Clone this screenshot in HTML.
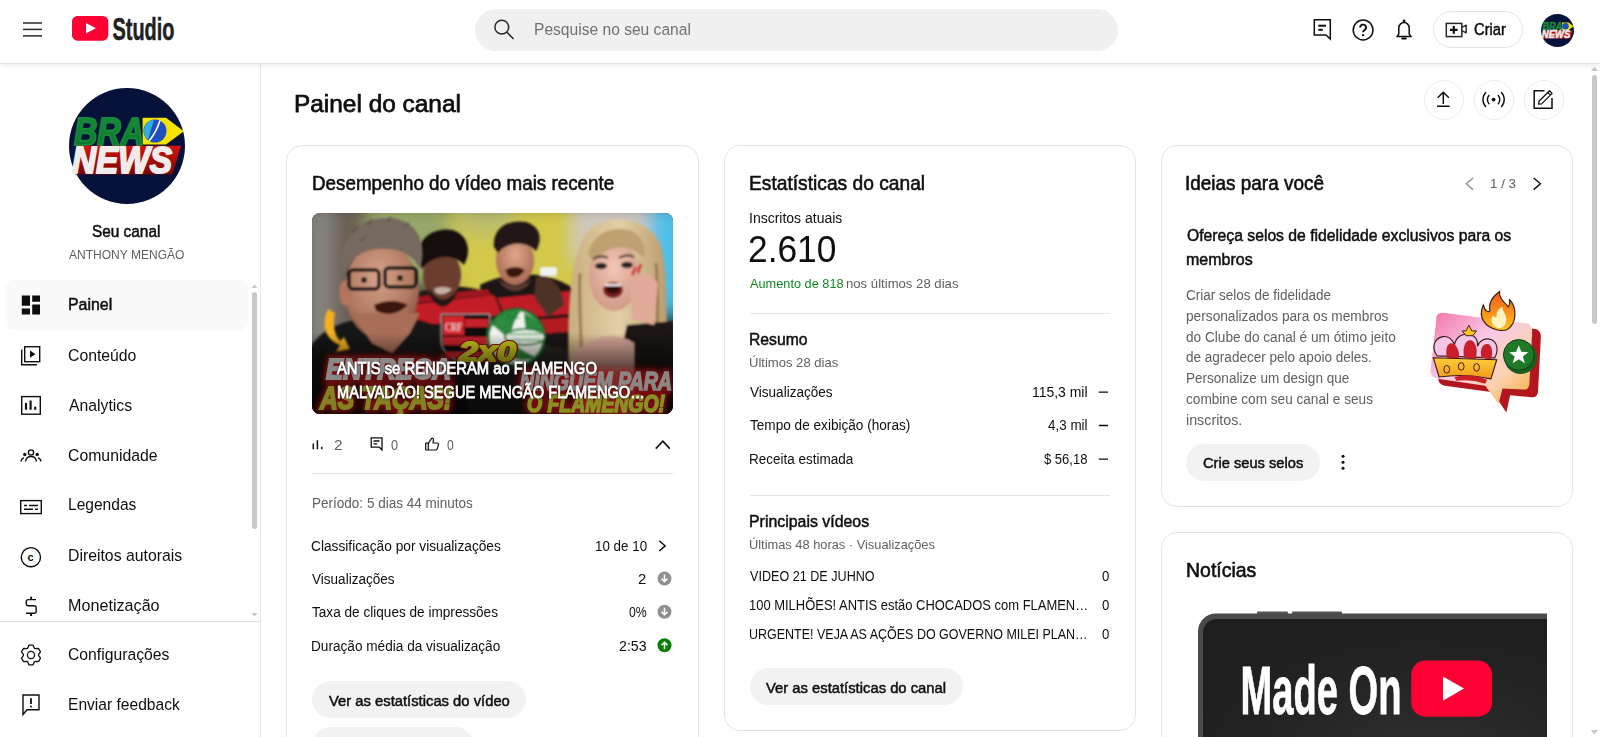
<!DOCTYPE html>
<html><head><meta charset="utf-8"><title>Painel do canal - YouTube Studio</title>
<style>
html,body{margin:0;padding:0;width:1600px;height:737px;overflow:hidden;background:#fff;font-family:"Liberation Sans",sans-serif;}
.t{position:absolute;white-space:nowrap;transform-origin:0 0;}
.a{position:absolute;}
.hdr{position:absolute;left:0;top:0;width:1600px;height:63px;background:#fff;box-shadow:0 1px 0 #e3e3e3,0 2px 6px rgba(0,0,0,.09)}
.side{position:absolute;left:0;top:64px;width:260px;height:673px;border-right:1px solid #e8e8e8;background:#fff}
.card{position:absolute;border:1px solid #e5e5e5;border-radius:16px;background:#fff;box-sizing:border-box}
.btn{position:absolute;background:#f2f2f2;border-radius:19px}
.div{position:absolute;height:1px;background:#e5e5e5}
svg{position:absolute;overflow:visible}

</style></head><body>
<div class="side"></div>
<!-- HEADER -->
<div class="hdr"></div>
<svg style="left:0;top:0" width="1600" height="64">
  <g stroke="#282828" stroke-width="1.5">
    <line x1="23" y1="23" x2="42" y2="23"/><line x1="23" y1="29.4" x2="42" y2="29.4"/><line x1="23" y1="35.9" x2="42" y2="35.9"/>
  </g>
  <rect x="72" y="16" width="36.3" height="24.7" rx="5.5" fill="#ff0033"/>
  <path d="M86 22.9 L95.8 28.2 L86 33.5 Z" fill="#fff"/>
  <text x="112.5" y="39.8" font-family="Liberation Sans" font-weight="bold" font-size="31.4" textLength="62" lengthAdjust="spacingAndGlyphs" fill="#212121" stroke="#212121" stroke-width="0.5">Studio</text>
</svg>
<div class="a" style="left:475px;top:9px;width:643px;height:42px;border-radius:21px;background:#f0f0f0"></div>
<svg style="left:0;top:0" width="1600" height="64">
  <circle cx="501.8" cy="27.2" r="6.9" fill="none" stroke="#282828" stroke-width="1.5"/>
  <line x1="506.9" y1="32.3" x2="513.6" y2="39" stroke="#282828" stroke-width="1.5"/>
  <!-- feedback header -->
  <path d="M1314.3 19.8 H1330.3 V39 L1326 34.9 H1314.3 Z" fill="none" stroke="#0f0f0f" stroke-width="1.5" stroke-linejoin="miter"/>
  <line x1="1318.3" y1="25.7" x2="1326" y2="25.7" stroke="#0f0f0f" stroke-width="2"/>
  <line x1="1318.3" y1="29.8" x2="1322.8" y2="29.8" stroke="#0f0f0f" stroke-width="2"/>
  <!-- help -->
  <circle cx="1363.1" cy="30" r="9.9" fill="none" stroke="#0f0f0f" stroke-width="1.5"/>
  <path d="M1360.2 27.6 a2.9 2.9 0 1 1 4.4 2.4 c-1.1 .7 -1.5 1.2 -1.5 2.2" fill="none" stroke="#0f0f0f" stroke-width="1.9"/>
  <circle cx="1363.1" cy="35.2" r="1.15" fill="#0f0f0f"/>
  <!-- bell -->
  <path d="M1397 36.6 H1411.2 L1409.2 34 V28 a5.2 5.5 0 0 0 -10.4 0 V34 Z" fill="none" stroke="#0f0f0f" stroke-width="1.5" stroke-linejoin="round"/>
  <path d="M1402.3 38.6 h3.6" stroke="#0f0f0f" stroke-width="2" stroke-linecap="round"/>
  <circle cx="1404.1" cy="21" r="1.4" fill="#0f0f0f"/>
</svg>
<div class="a" style="left:1433px;top:11px;width:88px;height:35px;border:1px solid #e5e5e5;border-radius:19px;"></div>
<svg style="left:0;top:0" width="1600" height="64">
  <rect x="1446.3" y="23.4" width="15.5" height="13.2" fill="none" stroke="#282828" stroke-width="1.5"/>
  <path d="M1461.8 27.3 L1466.2 25.2 V32.8 L1461.8 30.7" fill="none" stroke="#282828" stroke-width="1.4" stroke-linejoin="round"/>
  <path d="M1453.8 26.1 V33.8 M1449.9 29.9 H1457.6" stroke="#0f0f0f" stroke-width="2.2"/>
</svg>
<!-- small avatar -->
<svg style="left:1541px;top:13.5px" width="33" height="33" viewBox="0 0 116 116">
  <circle cx="58" cy="58" r="58" fill="#06123a"/>
  <path d="M73.6 29.8 H97 L114.8 43.2 L97 56.6 H73.6 Z" fill="#f7e300"/>
  <circle cx="86" cy="43" r="11.5" fill="#1f4fc0"/>
  <text x="5" y="56.6" font-family="Liberation Sans" font-weight="bold" font-style="italic" font-size="38.7" fill="#15883a" stroke="#15883a" stroke-width="2.2" textLength="70" lengthAdjust="spacingAndGlyphs">BRA</text>
  <path d="M8 57.7 H112.1 L103.4 86.4 H6.3 Z" fill="#b80b0b"/>
  <text x="3" y="85.4" font-family="Liberation Sans" font-weight="bold" font-style="italic" font-size="37.5" fill="#f1ecec" stroke="#f1ecec" stroke-width="2" textLength="100" lengthAdjust="spacingAndGlyphs">NEWS</text>
</svg>

<!-- SIDEBAR -->
<svg style="left:69px;top:88px" width="116" height="116" viewBox="0 0 116 116">
  <defs><linearGradient id="redb" x1="0" y1="0" x2="0" y2="1"><stop offset="0" stop-color="#d5140f"/><stop offset="1" stop-color="#7a0606"/></linearGradient>
  <linearGradient id="grn" x1="0" y1="0" x2="0" y2="1"><stop offset="0" stop-color="#17923c"/><stop offset="1" stop-color="#0d6e2a"/></linearGradient></defs>
  <circle cx="58" cy="58" r="58" fill="#06123a"/>
  <path d="M73.6 29.8 H97 L114.8 43.2 L97 56.6 H73.6 Z" fill="#f7e300"/>
  <circle cx="86" cy="43" r="11.5" fill="#1f4fc0"/>
  <path d="M76 38 a11.5 11.5 0 0 1 9 -6.5 L79 52 a11.5 11.5 0 0 1 -3 -14 z" fill="#33aee0"/>
  <path d="M91 32.5 Q87 45 80 53" stroke="#fff" stroke-width="1.6" fill="none"/>
  <text x="5" y="56.6" font-family="Liberation Sans" font-weight="bold" font-style="italic" font-size="38.7" fill="url(#grn)" stroke="#15883a" stroke-width="2.2" stroke-linejoin="round" textLength="70" lengthAdjust="spacingAndGlyphs">BRA</text>
  <path d="M8 57.7 H112.1 L103.4 86.4 H6.3 Z" fill="url(#redb)"/>
  <text x="3" y="85.4" font-family="Liberation Sans" font-weight="bold" font-style="italic" font-size="37.5" fill="#f1ecec" stroke="#f1ecec" stroke-width="2" stroke-linejoin="round" textLength="100" lengthAdjust="spacingAndGlyphs">NEWS</text>
</svg>
<div class="a" style="left:6px;top:280px;width:242px;height:50px;border-radius:8px;background:#f9f9f9"></div>
<!-- sidebar scrollbar -->
<div class="a" style="left:252px;top:292px;width:5px;height:237px;border-radius:3px;background:#c8c8c8"></div>
<svg style="left:0;top:0" width="260" height="737">
  <path d="M251.5 288 L254.5 284.5 L257.5 288 Z" fill="#c8c8c8"/>
  <path d="M251.5 613 L254.5 616.5 L257.5 613 Z" fill="#c8c8c8"/>
</svg>
<div class="div" style="left:0;top:621px;width:260px"></div>
<svg style="left:0;top:0" width="260" height="737">
  <!-- dashboard -->
  <path d="M21.8 295.6 h8.2 v10.2 h-8.2z M21.8 308.6 h8.2 v6 h-8.2z M32.2 295.6 h7.8 v6.2 h-7.8z M32.2 304.5 h7.8 v10.1 h-7.8z" fill="#0f0f0f"/>
  <!-- content -->
  <g fill="none" stroke="#0f0f0f" stroke-width="1.4">
    <rect x="24.7" y="346.7" width="15" height="15"/>
    <path d="M21.7 349.5 V364.7 H36.9"/>
  </g>
  <path d="M30 350.6 L35.5 354.2 L30 357.8 Z" fill="#0f0f0f"/>
  <!-- analytics -->
  <rect x="21.7" y="396.6" width="18.6" height="17.6" fill="none" stroke="#0f0f0f" stroke-width="1.4"/>
  <path d="M26 403 v6.8 M30.6 400.6 v9.2 M35.2 406.8 v3" stroke="#0f0f0f" stroke-width="2.1"/>
  <!-- community -->
  <g fill="none" stroke="#0f0f0f" stroke-width="1.4">
    <circle cx="31" cy="452.5" r="2.6"/>
    <path d="M25.5 461.5 c0.5-3.5 2.8-5 5.5-5 s5 1.5 5.5 5"/>
    <path d="M21 461.5 c0.2-2 1.2-3.2 3-3.6 M41 461.5 c-.2-2-1.2-3.2-3-3.6"/>
  </g>
  <circle cx="24.8" cy="454.5" r="1.7" fill="#0f0f0f"/><circle cx="37.2" cy="454.5" r="1.7" fill="#0f0f0f"/>
  <!-- subtitles -->
  <rect x="20.7" y="500.6" width="20.6" height="13" fill="none" stroke="#0f0f0f" stroke-width="1.4"/>
  <path d="M24 505.5 h3 M29 505.5 h9 M24 509.3 h9 M35 509.3 h3" stroke="#0f0f0f" stroke-width="1.6"/>
  <!-- copyright -->
  <circle cx="30.9" cy="557.2" r="9.6" fill="none" stroke="#0f0f0f" stroke-width="1.4"/>
  <text x="27.6" y="561" font-family="Liberation Sans" font-weight="bold" font-size="11" fill="#0f0f0f">c</text>
  <!-- dollar -->
  <path d="M36 599.6 H28.3 Q26.3 599.6 26.3 601.6 V603.7 Q26.3 605.7 28.3 605.7 H34.2 Q36.2 605.7 36.2 607.7 V611.3 Q36.2 613.3 34.2 613.3 H26" fill="none" stroke="#0f0f0f" stroke-width="1.4"/>
  <path d="M31.1 596.8 V599.6 M31.1 613.3 V616" stroke="#0f0f0f" stroke-width="1.9"/>
  <!-- gear -->
  <g>
    <path d="M27.67 648.17 L28.92 645.22 L33.08 645.22 L34.33 648.17 L35.25 648.70 L38.43 648.31 L40.51 651.91 L38.58 654.47 L38.58 655.53 L40.51 658.09 L38.43 661.69 L35.25 661.30 L34.33 661.83 L33.08 664.78 L28.92 664.78 L27.67 661.83 L26.75 661.30 L23.57 661.69 L21.49 658.09 L23.42 655.53 L23.42 654.47 L21.49 651.91 L23.57 648.31 L26.75 648.70 Z" fill="none" stroke="#0f0f0f" stroke-width="1.3" stroke-linejoin="round"/>
    <circle cx="31" cy="655" r="3.6" fill="none" stroke="#0f0f0f" stroke-width="1.3"/>
  </g>
  <!-- feedback -->
  <path d="M23 695 H39 V709.8 H27 L23 714.5 Z" fill="none" stroke="#0f0f0f" stroke-width="1.4" stroke-linejoin="miter"/>
  <path d="M31 698.3 v5.6" stroke="#0f0f0f" stroke-width="1.8"/>
  <circle cx="31" cy="706.6" r="1" fill="#0f0f0f"/>
</svg>
<!-- MAIN -->
<div class="a" style="left:1424px;top:80px;width:38px;height:38px;border:1px solid #ececec;border-radius:50%"></div>
<div class="a" style="left:1474px;top:80px;width:38px;height:38px;border:1px solid #ececec;border-radius:50%"></div>
<div class="a" style="left:1524px;top:80px;width:38px;height:38px;border:1px solid #ececec;border-radius:50%"></div>
<svg style="left:0;top:0" width="1600" height="140">
  <!-- upload -->
  <path d="M1443.3 92.5 V104 M1437.7 97.8 L1443.3 92.2 L1448.9 97.8 M1437 106.2 H1449.6" fill="none" stroke="#0f0f0f" stroke-width="1.5"/>
  <!-- live -->
  <circle cx="1493.6" cy="99.6" r="1.9" fill="#0f0f0f"/>
  <path d="M1489.3 95 a6.5 6.5 0 0 0 0 9.2 M1497.9 95 a6.5 6.5 0 0 1 0 9.2 M1486 92.2 a10.5 10.5 0 0 0 0 14.8 M1501.2 92.2 a10.5 10.5 0 0 1 0 14.8" fill="none" stroke="#0f0f0f" stroke-width="1.4"/>
  <!-- edit -->
  <path d="M1544.5 90.8 H1534.2 V108.3 H1552 V98" fill="none" stroke="#0f0f0f" stroke-width="1.5"/>
  <path d="M1538.6 104.2 L1539 101.3 L1549.5 90.8 L1552.1 93.4 L1541.6 103.9 Z M1547.8 92.5 L1550.4 95.1" fill="none" stroke="#0f0f0f" stroke-width="1.3" stroke-linejoin="round"/>
</svg>
<!-- main scrollbar -->
<div class="a" style="left:1591.8px;top:75px;width:5.5px;height:249px;border-radius:3px;background:#c8c8c8"></div>
<svg style="left:1580px;top:60px" width="20" height="677">
  <path d="M10.8 10.9 L14.4 6.8 L18 10.9 Z" fill="#c8c8c8"/>
  <path d="M10.8 669.9 L14.4 674.4 L18 669.9 Z" fill="#c8c8c8"/>
</svg>

<!-- CARD 1 -->
<div class="card" style="left:286px;top:145px;width:413px;height:620px"></div>
<div class="div" style="left:312px;top:473px;width:361px"></div>
<!-- THUMB -->
<svg style="left:312px;top:213px" width="361" height="201" viewBox="0 0 361 201">
<defs>
  <clipPath id="thc"><rect width="361" height="201" rx="8"/></clipPath>
  <filter id="bl1" x="-20%" y="-20%" width="140%" height="140%"><feGaussianBlur stdDeviation="9"/></filter>
  <filter id="bl2" x="-20%" y="-20%" width="140%" height="140%"><feGaussianBlur stdDeviation="1.3"/></filter>
  <filter id="bl3" x="-20%" y="-20%" width="140%" height="140%"><feGaussianBlur stdDeviation="2.5"/></filter>
  <linearGradient id="shade" x1="0" y1="0" x2="0" y2="1">
    <stop offset="0.6" stop-color="#000" stop-opacity="0"/>
    <stop offset="0.8" stop-color="#000" stop-opacity=".35"/>
    <stop offset="1" stop-color="#000" stop-opacity=".5"/>
  </linearGradient>
  <radialGradient id="skin1" cx=".45" cy=".35" r=".65"><stop offset="0" stop-color="#d8a48c"/><stop offset=".7" stop-color="#b07860"/><stop offset="1" stop-color="#8a5544"/></radialGradient>
  <radialGradient id="skin2" cx=".5" cy=".4" r=".6"><stop offset="0" stop-color="#f2c6b4"/><stop offset="1" stop-color="#d19a86"/></radialGradient>
  <radialGradient id="skin3" cx=".5" cy=".4" r=".6"><stop offset="0" stop-color="#e0a88c"/><stop offset="1" stop-color="#a86a52"/></radialGradient>
  <linearGradient id="hair" x1="0" y1="0" x2="1" y2="0"><stop offset="0" stop-color="#c9ae7e"/><stop offset=".5" stop-color="#e3cfa6"/><stop offset="1" stop-color="#b89a6a"/></linearGradient>
</defs>
<g clip-path="url(#thc)">
  <rect width="361" height="201" fill="#2a2624"/>
  <g filter="url(#bl1)">
    <rect x="-10" y="-10" width="40" height="170" fill="#86847f"/>
    <rect x="22" y="-10" width="35" height="160" fill="#6a5d52"/>
    <rect x="55" y="-10" width="90" height="85" fill="#98a868"/>
    <rect x="140" y="-10" width="140" height="105" fill="#d2c848"/>
    <rect x="150" y="-10" width="50" height="30" fill="#b8bc70"/>
    <rect x="262" y="-10" width="80" height="60" fill="#cfc8c0"/>
    <rect x="336" y="-10" width="40" height="115" fill="#4fc0e8"/>
    <rect x="330" y="100" width="40" height="60" fill="#242020"/>
  </g>
  <!-- player 2 (behind) -->
  <g filter="url(#bl2)">
    <path d="M168 72 C190 60 232 54 262 76 L276 112 L255 135 L172 125 Z" fill="#1e1616"/>
    <path d="M176 86 L258 78 L266 100 L180 108 Z" fill="#c01c26"/>
    <path d="M180 110 L262 104 L266 118 L184 124 Z" fill="#b01a22"/>
    <ellipse cx="203" cy="47" rx="19" ry="25" fill="url(#skin3)"/>
    <path d="M182 34 C180 14 198 6 214 9 C230 14 230 28 224 38 C214 28 196 28 186 40 Z" fill="#211815"/>
    <path d="M193 57 Q203 51 213 57 Q206 68 196 63 Z" fill="#3a1210"/>
    <path d="M186 66 Q203 80 220 66 L216 72 Q203 84 190 72 Z" fill="#5a3a30"/>
    <rect x="228" y="54" width="17" height="9" rx="2" fill="#f0f0f0"/>
    <path d="M224 64 C236 60 250 70 252 92 L236 104 L222 84 Z" fill="#4e3228"/>
  </g>
  <!-- player 1 -->
  <g filter="url(#bl2)">
    <path d="M92 112 L106 80 C128 70 160 72 184 82 L196 112 L186 135 L98 135 Z" fill="#1e1414"/>
    <path d="M98 92 L182 82 L190 102 L100 114 Z" fill="#c41e28"/>
    <path d="M103 84 L176 76 L179 82 L105 90 Z" fill="#a0161c"/>
    <ellipse cx="130" cy="62" rx="19" ry="25" fill="#6a3e2e"/>
    <path d="M106 48 C103 24 124 14 140 17 C156 21 160 38 152 52 C142 40 120 42 110 56 Z" fill="#120e0e"/>
    <path d="M116 74 Q130 98 146 76 Q142 92 130 94 Q118 90 116 74 Z" fill="#241612"/>
    <path d="M122 76 Q130 72 140 76 Q132 84 124 80 Z" fill="#f0e0d8" opacity=".7"/>
  </g>
  <!-- man 1 (left) -->
  <g filter="url(#bl2)">
    <path d="M-5 140 C8 112 40 104 78 104 C118 104 140 118 152 150 L156 205 L-5 205 Z" fill="#141414"/>
    <ellipse cx="70" cy="78" rx="37" ry="48" fill="url(#skin1)"/>
    <ellipse cx="34" cy="80" rx="7" ry="13" fill="#b27560"/>
    <path d="M40 100 L108 100 L98 120 L80 140 L60 130 Z" fill="#a86e58"/>
    <path d="M30 56 C26 18 56 2 80 5 C104 8 116 28 108 56 C102 42 86 34 66 36 C50 38 38 44 32 60 Z" fill="#76695f"/>
    <path d="M40 20 l6 -6 M55 12 l5 -5 M75 9 l4 -5 M92 14 l5 -4 M48 28 l6-4" stroke="#5e554e" stroke-width="2"/>
    <rect x="37" y="57" width="30" height="19" rx="4" fill="none" stroke="#0e0e0e" stroke-width="3.5"/>
    <rect x="73" y="55" width="31" height="19" rx="4" fill="none" stroke="#0e0e0e" stroke-width="3.5"/>
    <circle cx="52" cy="67" r="3" fill="#2a1a14"/><circle cx="88" cy="65" r="3" fill="#2a1a14"/>
    <path d="M62 92 Q80 84 96 92 Q82 106 64 98 Z" fill="#3a1410"/>
  </g>
  <path d="M16 96 C9 110 12 126 28 132 L24 139 L38 136 L32 124 L28 128 C21 120 21 108 23 100 Z" fill="#f2b020" filter="url(#bl2)"/>
  <!-- logos -->
  <g filter="url(#bl2)">
    <path d="M129 101 H178 V128 C178 140 165 148 153.5 152 C142 148 129 140 129 128 Z" fill="#111" stroke="#c8c8c8" stroke-width="1"/>
    <rect x="131" y="103" width="21" height="19" fill="#d3202a"/>
    <text x="133" y="118" font-family="Liberation Serif" font-size="13" fill="#f2e8e8" textLength="17" lengthAdjust="spacingAndGlyphs">CRF</text>
    <path d="M153 106 H176 V114 H153 Z M131 124 H177 V132 H131 Z M133 139 H175 L172 145 H136 Z" fill="#c8202a"/>
    <circle cx="204" cy="124.5" r="28" fill="#eef3ec" stroke="#1c7632" stroke-width="3"/>
    <path d="M180 112 C188 100 200 96 210 97 C202 106 198 118 200 130 C192 122 186 116 180 112 Z" fill="#2a8a3c"/>
    <path d="M212 100 C224 104 232 114 232 124 L214 124 C214 116 212 106 212 100 Z" fill="#2a8a3c"/>
    <path d="M186 136 C196 146 212 150 224 144 C214 140 206 134 200 130 Z" fill="#2a8a3c"/>
    <ellipse cx="213" cy="124" rx="20" ry="8" fill="#e8efe6" stroke="#1c7632" stroke-width="2"/>
    <path d="M197 121 h32 M197 127 h32" stroke="#2a8a3c" stroke-width="1.5" opacity=".7"/>
    <text x="195" y="106" font-family="Liberation Sans" font-weight="bold" font-size="7" fill="#1c7632">E.C.</text>
  </g>
  <text x="147" y="148" font-family="Liberation Sans" font-weight="bold" font-style="italic" font-size="28" fill="#c8c81c" stroke="#8a1010" stroke-width="4" stroke-linejoin="round" textLength="57" lengthAdjust="spacingAndGlyphs">2x0</text>
  <text x="147" y="148" font-family="Liberation Sans" font-weight="bold" font-style="italic" font-size="28" fill="#c8c81c" stroke="#c8c81c" stroke-width="1.8" stroke-linejoin="round" textLength="57" lengthAdjust="spacingAndGlyphs">2x0</text>
  <!-- woman -->
  <g filter="url(#bl2)">
    <path d="M258 175 C254 110 256 40 278 16 C300 0 334 4 348 30 C358 62 352 120 358 175 Z" fill="url(#hair)"/>
    <path d="M268 60 C266 100 272 140 268 170 M344 50 C348 90 342 140 350 170" stroke="#9a7d52" stroke-width="3" fill="none"/>
    <path d="M315 112 C305 150 310 180 325 201 L361 201 L361 108 Z" fill="#1c1818"/>
    <ellipse cx="302" cy="62" rx="25" ry="36" fill="url(#skin2)"/>
    <path d="M276 42 C280 20 300 12 320 18 C332 25 334 35 332 46 C322 32 300 28 282 48 Z" fill="#bfa070"/>
    <ellipse cx="289" cy="53" rx="6" ry="3.2" fill="#2a2028"/><ellipse cx="315" cy="52" rx="6" ry="3.2" fill="#2a2028"/>
    <path d="M281 46 q8 -5 15 -1 M307 45 q8 -5 15 -1" stroke="#3a2a20" stroke-width="2" fill="none"/>
    <ellipse cx="301" cy="77" rx="10" ry="8" fill="#7a1a20"/>
    <ellipse cx="301" cy="76" rx="6.5" ry="4.5" fill="#2e0a0e"/>
    <path d="M293 72 h16" stroke="#f4f0f0" stroke-width="2"/>
    <path d="M318 70 C324 58 336 56 346 70 L342 112 L320 106 Z" fill="#e2aa98"/>
    <path d="M320 62 l4 -8 M326 60 l3 -9" stroke="#d01020" stroke-width="2.5"/>
    <path d="M262 140 C280 122 304 118 322 130 L322 201 L262 201 Z" fill="#d8a898"/>
  </g>
  <rect width="361" height="201" fill="url(#shade)"/>
  <!-- big background captions -->
  <defs><filter id="glow" x="-10%" y="-30%" width="120%" height="160%"><feGaussianBlur stdDeviation="3"/></filter></defs>
  <linearGradient id="sh2" x1="0" y1="0" x2="0" y2="1"><stop offset="0" stop-color="#000" stop-opacity="0"/><stop offset=".4" stop-color="#000" stop-opacity=".35"/><stop offset="1" stop-color="#000" stop-opacity=".45"/></linearGradient>
  <rect y="120" width="361" height="81" fill="url(#sh2)"/>
  <g font-family="Liberation Sans" font-weight="bold" font-style="italic">
    <g filter="url(#glow)" stroke="#a01010" stroke-width="7" fill="#a01010" opacity=".75">
      <text x="14" y="166" font-size="30" textLength="125" lengthAdjust="spacingAndGlyphs">ENTREGA</text>
      <text x="8" y="196" font-size="31" textLength="132" lengthAdjust="spacingAndGlyphs">AS TAÇAS!</text>
      <text x="208" y="177" font-size="25" textLength="152" lengthAdjust="spacingAndGlyphs">NINGUEM PARA</text>
      <text x="215" y="199" font-size="24" textLength="138" lengthAdjust="spacingAndGlyphs">O FLAMENGO!</text>
    </g>
    <text x="14" y="166" font-size="30" fill="#8c8888" stroke="#8c8888" stroke-width="2" textLength="125" lengthAdjust="spacingAndGlyphs">ENTREGA</text>
    <text x="8" y="196" font-size="31" fill="#828222" stroke="#828222" stroke-width="2" textLength="132" lengthAdjust="spacingAndGlyphs">AS TAÇAS!</text>
    <text x="208" y="177" font-size="25" fill="#8a8686" stroke="#8a8686" stroke-width="1.6" textLength="152" lengthAdjust="spacingAndGlyphs">NINGUEM PARA</text>
    <text x="215" y="199" font-size="24" fill="#8a9020" stroke="#8a9020" stroke-width="1.6" textLength="138" lengthAdjust="spacingAndGlyphs">O FLAMENGO!</text>
  </g>
</g>
</svg>

<!-- /THUMB -->
<svg style="left:0;top:0" width="1600" height="737">
  <!-- bars -->
  <path d="M313.3 443.5 v5.7 M317.4 440.3 v8.9 M321.8 446.8 v2.4" stroke="#0f0f0f" stroke-width="1.5"/>
  <!-- comment -->
  <path d="M371.2 437.8 H382 V450 L379.3 447.2 H371.2 Z" fill="none" stroke="#0f0f0f" stroke-width="1.3"/>
  <path d="M373.5 441 h6 M373.5 443.8 h3.8" stroke="#0f0f0f" stroke-width="1.3"/>
  <!-- like -->
  <path d="M425.7 443.2 h2.6 v6.8 h-2.6 z M428.3 443.4 L431.6 438.4 c.9-.6 2 0 1.9 1.2 L433 443 h4.2 c.9 0 1.5.8 1.3 1.6 l-1.3 4.3 c-.2.7-.8 1.1-1.5 1.1 H428.3" fill="none" stroke="#0f0f0f" stroke-width="1.2" stroke-linejoin="round"/>
  <!-- chevron up -->
  <path d="M655.8 448.6 L662.8 441.2 L669.8 448.6" fill="none" stroke="#0f0f0f" stroke-width="1.6"/>
  <!-- chevron right -->
  <path d="M659.3 540.8 L665.2 545.9 L659.3 551" fill="none" stroke="#0f0f0f" stroke-width="1.4"/>
  <!-- status circles -->
  <circle cx="664.5" cy="578.6" r="7" fill="#909090"/>
  <path d="M664.5 574.5 v7 M661.6 578.7 L664.5 581.6 L667.4 578.7" fill="none" stroke="#fff" stroke-width="1.5"/>
  <circle cx="664.5" cy="611.8" r="7" fill="#909090"/>
  <path d="M664.5 607.7 v7 M661.6 611.9 L664.5 614.8 L667.4 611.9" fill="none" stroke="#fff" stroke-width="1.5"/>
  <circle cx="664.5" cy="645.2" r="7" fill="#0a7e07"/>
  <path d="M664.5 649.3 v-7 M661.6 645.1 L664.5 642.2 L667.4 645.1" fill="none" stroke="#fff" stroke-width="1.5"/>
</svg>
<div class="btn" style="left:312px;top:681px;width:214px;height:37px"></div>
<div class="btn" style="left:312px;top:727px;width:162px;height:37px"></div>

<!-- CARD 2 -->
<div class="card" style="left:724px;top:145px;width:412px;height:586px"></div>
<div class="div" style="left:750px;top:313px;width:360px"></div>
<div class="div" style="left:750px;top:495px;width:360px"></div>
<svg style="left:0;top:0" width="1600" height="737">
  <path d="M1098.8 392.2 h9.2 M1098.8 425.5 h9.2 M1098.8 459.2 h9.2" stroke="#0f0f0f" stroke-width="1.3"/>
</svg>
<div class="btn" style="left:750px;top:668px;width:213px;height:37px"></div>

<!-- CARD 3 -->
<div class="card" style="left:1161px;top:145px;width:412px;height:362px"></div>
<svg style="left:0;top:0" width="1600" height="737">
  <path d="M1473 178 L1466.3 183.8 L1473 189.6" fill="none" stroke="#909090" stroke-width="1.4"/>
  <path d="M1533.7 178 L1540.4 183.8 L1533.7 189.6" fill="none" stroke="#0f0f0f" stroke-width="1.4"/>
  <circle cx="1343" cy="456.3" r="1.5" fill="#0f0f0f"/><circle cx="1343" cy="462.3" r="1.5" fill="#0f0f0f"/><circle cx="1343" cy="468.3" r="1.5" fill="#0f0f0f"/>
</svg>
<div class="btn" style="left:1186px;top:444px;width:134px;height:37px"></div>
<!-- ILLUS -->
<svg style="left:1417.9px;top:280.8px" width="134.4" height="134.4" viewBox="0 0 140 140">
<defs>
  <linearGradient id="bub" x1="0" y1="0" x2="1" y2="1">
    <stop offset="0" stop-color="#f472a8"/><stop offset=".4" stop-color="#f9c9e6"/><stop offset=".7" stop-color="#fbd2b0"/><stop offset="1" stop-color="#f7a930"/>
  </linearGradient>
  <linearGradient id="flm" x1="0" y1="0" x2="0" y2="1"><stop offset="0" stop-color="#f25a1c"/><stop offset="1" stop-color="#ffc21a"/></linearGradient>
  <linearGradient id="crw" x1="0" y1="0" x2="0" y2="1"><stop offset="0" stop-color="#ffcd3a"/><stop offset="1" stop-color="#f39a1a"/></linearGradient>
</defs>
  <!-- shadow bubble -->
  <path d="M22 42 Q20 34 28 34 L118 46 Q124 47 124 54 L121 112 Q120 118 114 117 L92 115 L88 133 L74 112 L24 105 Q17 104 17 97 Z" fill="#b3161e" transform="translate(4 4)"/>
  <!-- main bubble -->
  <path d="M19 41 Q18 33 26 33 L112 44 Q119 45 119 52 L116 108 Q115 114 109 113 L88 112 L84 128 L70 109 L22 102 Q13 101 13 94 Z" fill="url(#bub)"/>
  <!-- flame -->
  <path d="M83 51 C70 48 62 38 68 25 C70 32 73 33 75 31 C73 22 78 16 85 11 C84 18 90 22 94 27 C96 24 96 22 95 19 C103 27 103 42 95 49 C92 52 88 52 83 51 Z" fill="url(#flm)" stroke="#3a2210" stroke-width="1.2"/>
  <path d="M83 49 C77 47 75 41 78 36 C80 39 82 38 82 35 C82 31 85 28 88 27 C88 32 92 34 92 40 C92 46 88 50 83 49 Z" fill="#fff3c0"/>
  <!-- green coin -->
  <circle cx="107" cy="80" r="17" fill="#1a5e1e"/>
  <circle cx="105" cy="77" r="16" fill="#1f7a28" stroke="#0e3e12" stroke-width="1"/>
  <path d="M105 67 L107.7 73.8 L115 74.1 L109.3 78.6 L111.3 85.6 L105 81.5 L98.7 85.6 L100.7 78.6 L95 74.1 L102.3 73.8 Z" fill="#fff"/>
  <!-- crown -->
  <path d="M20 78 C14 70 16 60 26 58 C32 57 36 62 38 66 C40 58 46 54 54 56 C60 57 63 62 62 68 C64 62 70 59 76 61 C83 64 84 72 80 80 Z" fill="#f3c5e6" stroke="#3a1a1a" stroke-width="1.2"/>
  <path d="M30 80 C28 68 32 62 38 66 C42 70 44 76 42 82 Z M48 80 C46 68 50 60 56 62 C62 66 62 74 60 82 Z M66 80 C64 70 68 64 74 66 C78 70 78 76 76 82 Z" fill="#c9202c"/>
  <path d="M50 52 L53 46 L56 52 L61 52 L57 57 L50 57 L46 52 Z" fill="#ffc21a" stroke="#3a1a1a" stroke-width="1"/>
  <path d="M16 80 L82 82 L76 102 Q48 96 22 100 Z" fill="url(#crw)" stroke="#3a1a1a" stroke-width="1.2"/>
  <ellipse cx="30" cy="92" rx="3" ry="4" fill="none" stroke="#3a1a1a" stroke-width="1"/>
  <ellipse cx="45" cy="89" rx="3" ry="4" fill="none" stroke="#3a1a1a" stroke-width="1"/>
  <ellipse cx="61" cy="90" rx="3" ry="4" fill="none" stroke="#3a1a1a" stroke-width="1"/>
  <path d="M38 100 Q56 96 72 103 L70 107 Q55 102 40 104 Z" fill="#c9202c"/>
</svg>

<!-- /ILLUS -->

<!-- CARD 4 -->
<div class="card" style="left:1161px;top:532px;width:412px;height:260px"></div>

<!-- PHONE -->
<svg style="left:1190px;top:605px" width="370" height="132" viewBox="0 0 370 132">
<defs>
  <radialGradient id="scr" cx=".6" cy=".7" r=".7"><stop offset="0" stop-color="#2e2e2e"/><stop offset="1" stop-color="#1e1e1e"/></radialGradient>
  <clipPath id="phc"><rect x="0" y="0" width="357" height="132"/></clipPath>
</defs>
<g clip-path="url(#phc)">
  <rect x="67" y="6.5" width="31" height="3" rx="1" fill="#555"/>
  <rect x="102" y="6.5" width="50" height="3" rx="1" fill="#555"/>
  <rect x="8" y="8.5" width="380" height="200" rx="18" fill="#4a4a4a"/>
  <rect x="13" y="14" width="370" height="190" rx="14" fill="url(#scr)"/>
  <text x="50.5" y="109" font-family="Liberation Sans" font-weight="bold" font-size="69" fill="#fff" stroke="#fff" stroke-width="0.8" textLength="161" lengthAdjust="spacingAndGlyphs">Made On</text>
  <rect x="221.3" y="55.6" width="80.7" height="56.1" rx="14" fill="#ff0033"/>
  <path d="M253 71.6 L274 83.6 L253 95.7 Z" fill="#fff"/>
</g>
</svg>

<!-- /PHONE -->

<div class="t" id="srch" style="left:534.46px;top:21.61px;font-size:16.53px;line-height:16.53px;color:#717171;transform:scaleX(0.9439);">Pesquise no seu canal</div>
<div class="t" id="criar" style="left:1473.91px;top:21.71px;font-size:16.53px;line-height:16.53px;color:#0f0f0f;transform:scaleX(0.8914);-webkit-text-stroke:0.5px #0f0f0f;">Criar</div>
<div class="t" id="seu" style="left:92.37px;top:224.21px;font-size:16.53px;line-height:16.53px;color:#0f0f0f;transform:scaleX(0.9306);-webkit-text-stroke:0.5px #0f0f0f;">Seu canal</div>
<div class="t" id="anth" style="left:69.30px;top:248.43px;font-size:13.43px;line-height:13.43px;color:#606060;transform:scaleX(0.8961);">ANTHONY MENGÃO</div>
<div class="t" id="m1" style="left:67.94px;top:297.11px;font-size:16.53px;line-height:16.53px;color:#0f0f0f;transform:scaleX(0.9636);-webkit-text-stroke:0.5px #0f0f0f;">Painel</div>
<div class="t" id="m2" style="left:67.95px;top:347.61px;font-size:16.53px;line-height:16.53px;color:#0f0f0f;transform:scaleX(0.9543);">Conteúdo</div>
<div class="t" id="m3" style="left:69.00px;top:397.51px;font-size:16.53px;line-height:16.53px;color:#0f0f0f;transform:scaleX(0.9545);">Analytics</div>
<div class="t" id="m4" style="left:68.04px;top:447.71px;font-size:16.53px;line-height:16.53px;color:#0f0f0f;transform:scaleX(0.9565);">Comunidade</div>
<div class="t" id="m5" style="left:68.06px;top:497.41px;font-size:16.53px;line-height:16.53px;color:#0f0f0f;transform:scaleX(0.9423);">Legendas</div>
<div class="t" id="m6" style="left:68.04px;top:547.91px;font-size:16.53px;line-height:16.53px;color:#0f0f0f;transform:scaleX(0.9568);">Direitos autorais</div>
<div class="t" id="m7" style="left:68.02px;top:598.41px;font-size:16.53px;line-height:16.53px;color:#0f0f0f;transform:scaleX(0.9783);">Monetização</div>
<div class="t" id="m8" style="left:68.05px;top:646.71px;font-size:16.53px;line-height:16.53px;color:#0f0f0f;transform:scaleX(0.9524);">Configurações</div>
<div class="t" id="m9" style="left:68.06px;top:696.71px;font-size:16.53px;line-height:16.53px;color:#0f0f0f;transform:scaleX(0.9436);">Enviar feedback</div>
<div class="t" id="title" style="left:294.33px;top:92.41px;font-size:24.79px;line-height:24.79px;color:#0f0f0f;transform:scaleX(0.9849);-webkit-text-stroke:0.5px #0f0f0f;-webkit-text-stroke:0.75px #0f0f0f;">Painel do canal</div>
<div class="t" id="c1t" style="left:312.19px;top:172.96px;font-size:20.66px;line-height:20.66px;color:#0f0f0f;transform:scaleX(0.9106);-webkit-text-stroke:0.5px #0f0f0f;-webkit-text-stroke:0.6px #0f0f0f;">Desempenho do vídeo mais recente</div>
<div class="t" id="th1" style="left:337.40px;top:361.01px;font-size:16.53px;line-height:16.53px;color:#ffffff;transform:scaleX(0.8962);-webkit-text-stroke:0.5px #ffffff;-webkit-text-stroke:0.8px #fff;text-shadow:0 0 2px rgba(0,0,0,.9),0 1px 3px rgba(0,0,0,.8);">ANTIS se RENDERAM ao FLAMENGO</div>
<div class="t" id="th2" style="left:336.52px;top:385.21px;font-size:16.53px;line-height:16.53px;color:#ffffff;transform:scaleX(0.8841);-webkit-text-stroke:0.5px #ffffff;-webkit-text-stroke:0.8px #fff;text-shadow:0 0 2px rgba(0,0,0,.9),0 1px 3px rgba(0,0,0,.8);">MALVADÃO! SEGUE MENGÃO FLAMENGO…</div>
<div class="t" id="v2" style="left:333.93px;top:437.96px;font-size:14.46px;line-height:14.46px;color:#606060;transform:scaleX(1.0714);">2</div>
<div class="t" id="v0a" style="left:391.00px;top:437.96px;font-size:14.46px;line-height:14.46px;color:#606060;transform:scaleX(0.8750);">0</div>
<div class="t" id="v0b" style="left:447.00px;top:437.96px;font-size:14.46px;line-height:14.46px;color:#606060;transform:scaleX(0.8438);">0</div>
<div class="t" id="per" style="left:311.56px;top:496.46px;font-size:14.46px;line-height:14.46px;color:#606060;transform:scaleX(0.9357);">Período: 5 dias 44 minutos</div>
<div class="t" id="r1" style="left:311.45px;top:538.76px;font-size:14.46px;line-height:14.46px;color:#0f0f0f;transform:scaleX(0.9492);">Classificação por visualizações</div>
<div class="t" id="r1v" style="left:594.67px;top:538.76px;font-size:14.46px;line-height:14.46px;color:#0f0f0f;transform:scaleX(0.9255);">10 de 10</div>
<div class="t" id="r2" style="left:312.40px;top:572.46px;font-size:14.46px;line-height:14.46px;color:#0f0f0f;transform:scaleX(0.9375);">Visualizações</div>
<div class="t" id="r2v" style="left:638.27px;top:572.46px;font-size:14.46px;line-height:14.46px;color:#0f0f0f;transform:scaleX(1.0286);">2</div>
<div class="t" id="r3" style="left:312.40px;top:605.46px;font-size:14.46px;line-height:14.46px;color:#0f0f0f;transform:scaleX(0.9411);">Taxa de cliques de impressões</div>
<div class="t" id="r3v" style="left:628.70px;top:605.46px;font-size:14.46px;line-height:14.46px;color:#0f0f0f;transform:scaleX(0.8476);">0%</div>
<div class="t" id="r4" style="left:311.46px;top:638.56px;font-size:14.46px;line-height:14.46px;color:#0f0f0f;transform:scaleX(0.9422);">Duração média da visualização</div>
<div class="t" id="r4v" style="left:619.02px;top:638.56px;font-size:14.46px;line-height:14.46px;color:#0f0f0f;transform:scaleX(0.9815);">2:53</div>
<div class="t" id="b1" style="left:328.80px;top:693.18px;font-size:15.49px;line-height:15.49px;color:#0f0f0f;transform:scaleX(0.9550);-webkit-text-stroke:0.5px #0f0f0f;">Ver as estatísticas do vídeo</div>
<div class="t" id="c2t" style="left:748.87px;top:173.01px;font-size:20.66px;line-height:20.66px;color:#0f0f0f;transform:scaleX(0.9294);-webkit-text-stroke:0.5px #0f0f0f;-webkit-text-stroke:0.6px #0f0f0f;">Estatísticas do canal</div>
<div class="t" id="insc" style="left:748.83px;top:211.46px;font-size:14.46px;line-height:14.46px;color:#0f0f0f;transform:scaleX(0.9684);">Inscritos atuais</div>
<div class="t" id="big" style="left:748.30px;top:230.82px;font-size:37.19px;line-height:37.19px;color:#0f0f0f;transform:scaleX(0.9500);">2.610</div>
<div class="t" id="aum" style="left:749.80px;top:276.63px;font-size:13.43px;line-height:13.43px;color:#0f8a24;transform:scaleX(0.9500);">Aumento de 818</div>
<div class="t" id="aum2" style="left:845.72px;top:276.63px;font-size:13.43px;line-height:13.43px;color:#606060;transform:scaleX(0.9788);">nos últimos 28 dias</div>
<div class="t" id="res" style="left:749.05px;top:331.71px;font-size:16.53px;line-height:16.53px;color:#0f0f0f;transform:scaleX(0.9500);-webkit-text-stroke:0.5px #0f0f0f;">Resumo</div>
<div class="t" id="ult" style="left:749.03px;top:355.58px;font-size:13.43px;line-height:13.43px;color:#606060;transform:scaleX(0.9722);">Últimos 28 dias</div>
<div class="t" id="s1" style="left:750.00px;top:385.21px;font-size:14.46px;line-height:14.46px;color:#0f0f0f;transform:scaleX(0.9375);">Visualizações</div>
<div class="t" id="s1v" style="left:1032.04px;top:385.21px;font-size:14.46px;line-height:14.46px;color:#0f0f0f;transform:scaleX(0.9643);">115,3 mil</div>
<div class="t" id="s2" style="left:750.00px;top:418.46px;font-size:14.46px;line-height:14.46px;color:#0f0f0f;transform:scaleX(0.9412);">Tempo de exibição (horas)</div>
<div class="t" id="s2v" style="left:1048.00px;top:418.46px;font-size:14.46px;line-height:14.46px;color:#0f0f0f;transform:scaleX(0.9286);">4,3 mil</div>
<div class="t" id="s3" style="left:749.07px;top:452.21px;font-size:14.46px;line-height:14.46px;color:#0f0f0f;transform:scaleX(0.9347);">Receita estimada</div>
<div class="t" id="s3v" style="left:1043.75px;top:452.21px;font-size:14.46px;line-height:14.46px;color:#0f0f0f;transform:scaleX(0.9010);">$ 56,18</div>
<div class="t" id="pv" style="left:749.04px;top:513.81px;font-size:16.53px;line-height:16.53px;color:#0f0f0f;transform:scaleX(0.9621);-webkit-text-stroke:0.5px #0f0f0f;">Principais vídeos</div>
<div class="t" id="u48" style="left:749.04px;top:538.03px;font-size:13.43px;line-height:13.43px;color:#606060;transform:scaleX(0.9560);">Últimas 48 horas · Visualizações</div>
<div class="t" id="p1" style="left:750.00px;top:568.86px;font-size:14.46px;line-height:14.46px;color:#0f0f0f;transform:scaleX(0.8718);">VIDEO 21 DE JUHNO</div>
<div class="t" id="p1v" style="left:1102.20px;top:568.86px;font-size:14.46px;line-height:14.46px;color:#0f0f0f;transform:scaleX(0.9125);">0</div>
<div class="t" id="p2" style="left:749.10px;top:598.16px;font-size:14.46px;line-height:14.46px;color:#0f0f0f;transform:scaleX(0.8965);">100 MILHÕES! ANTIS estão CHOCADOS com FLAMEN…</div>
<div class="t" id="p2v" style="left:1102.20px;top:598.16px;font-size:14.46px;line-height:14.46px;color:#0f0f0f;transform:scaleX(0.9125);">0</div>
<div class="t" id="p3" style="left:749.14px;top:627.16px;font-size:14.46px;line-height:14.46px;color:#0f0f0f;transform:scaleX(0.8638);">URGENTE! VEJA AS AÇÕES DO GOVERNO MILEI PLAN…</div>
<div class="t" id="p3v" style="left:1102.20px;top:627.16px;font-size:14.46px;line-height:14.46px;color:#0f0f0f;transform:scaleX(0.9125);">0</div>
<div class="t" id="b2" style="left:766.40px;top:679.58px;font-size:15.49px;line-height:15.49px;color:#0f0f0f;transform:scaleX(0.9553);-webkit-text-stroke:0.5px #0f0f0f;">Ver as estatísticas do canal</div>
<div class="t" id="c3t" style="left:1185.07px;top:173.41px;font-size:20.66px;line-height:20.66px;color:#0f0f0f;transform:scaleX(0.9168);-webkit-text-stroke:0.5px #0f0f0f;-webkit-text-stroke:0.6px #0f0f0f;">Ideias para você</div>
<div class="t" id="pg" style="left:1489.90px;top:177.13px;font-size:13.43px;line-height:13.43px;color:#606060;transform:scaleX(0.9960);">1 / 3</div>
<div class="t" id="of1" style="left:1187.00px;top:227.91px;font-size:16.53px;line-height:16.53px;color:#0f0f0f;transform:scaleX(0.9518);-webkit-text-stroke:0.5px #0f0f0f;">Ofereça selos de fidelidade exclusivos para os</div>
<div class="t" id="of2" style="left:1186.03px;top:252.41px;font-size:16.53px;line-height:16.53px;color:#0f0f0f;transform:scaleX(0.9691);-webkit-text-stroke:0.5px #0f0f0f;">membros</div>
<div class="t" id="pa1" style="left:1186.06px;top:287.86px;font-size:14.46px;line-height:14.46px;color:#606060;transform:scaleX(0.9357);">Criar selos de fidelidade</div>
<div class="t" id="pa2" style="left:1186.05px;top:308.76px;font-size:14.46px;line-height:14.46px;color:#606060;transform:scaleX(0.9472);">personalizados para os membros</div>
<div class="t" id="pa3" style="left:1186.06px;top:329.66px;font-size:14.46px;line-height:14.46px;color:#606060;transform:scaleX(0.9425);">do Clube do canal é um ótimo jeito</div>
<div class="t" id="pa4" style="left:1186.06px;top:350.46px;font-size:14.46px;line-height:14.46px;color:#606060;transform:scaleX(0.9362);">de agradecer pelo apoio deles.</div>
<div class="t" id="pa5" style="left:1186.06px;top:371.46px;font-size:14.46px;line-height:14.46px;color:#606060;transform:scaleX(0.9364);">Personalize um design que</div>
<div class="t" id="pa6" style="left:1186.06px;top:392.46px;font-size:14.46px;line-height:14.46px;color:#606060;transform:scaleX(0.9421);">combine com seu canal e seus</div>
<div class="t" id="pa7" style="left:1186.01px;top:413.46px;font-size:14.46px;line-height:14.46px;color:#606060;transform:scaleX(0.9873);">inscritos.</div>
<div class="t" id="b3" style="left:1203.05px;top:455.08px;font-size:15.49px;line-height:15.49px;color:#0f0f0f;transform:scaleX(0.9467);-webkit-text-stroke:0.5px #0f0f0f;">Crie seus selos</div>
<div class="t" id="c4t" style="left:1186.26px;top:559.51px;font-size:20.66px;line-height:20.66px;color:#0f0f0f;transform:scaleX(0.9425);-webkit-text-stroke:0.5px #0f0f0f;-webkit-text-stroke:0.6px #0f0f0f;">Notícias</div>
</body></html>
